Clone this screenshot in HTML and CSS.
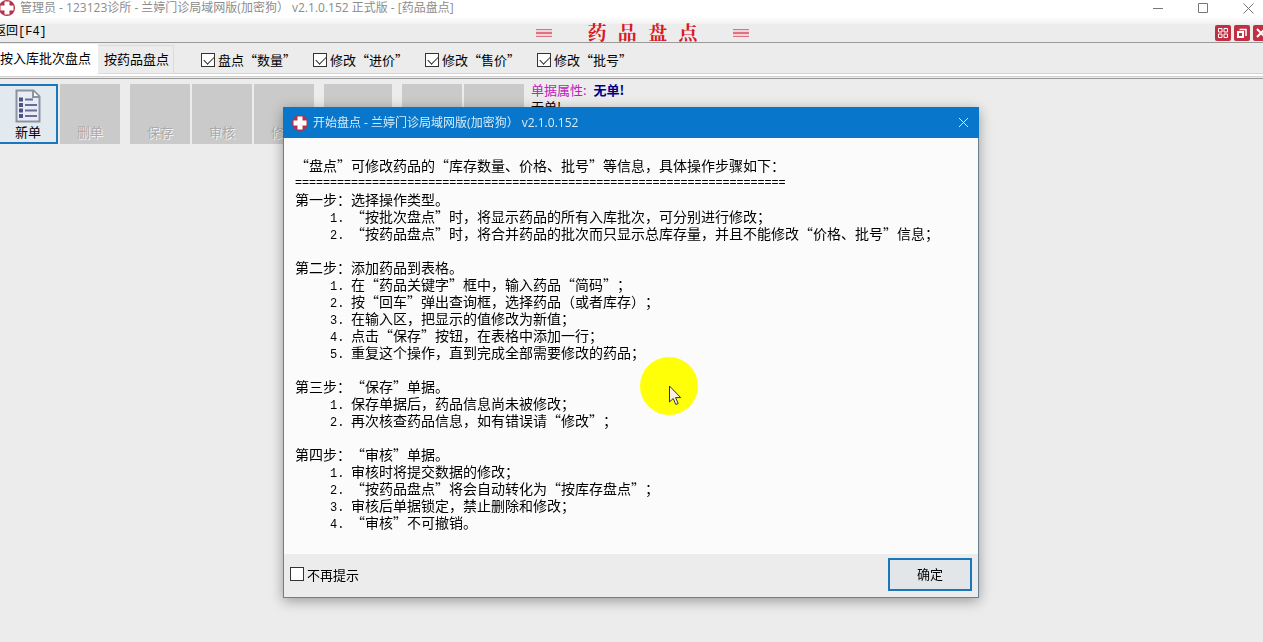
FILE: index.html
```html
<!DOCTYPE html>
<html lang="zh-CN">
	<head>
		<meta charset="UTF-8">
		<title>药品盘点</title>
		<link rel="stylesheet" href="styles.css">
	</head>
	<body>
		<svg width="0" height="0" class="defs">
			<symbol id="cross" viewBox="0 0 16 16">
				<circle cx="8" cy="8" r="8" fill="#b5304a"/>
				<path d="M5.5 1.5h5v4h4v5h-4v4h-5v-4h-4v-5h4z" fill="#fff"/>
			</symbol>
		</svg>

		<header class="titlebar">
			<svg class="logo"><use href="#cross"/></svg>
			<span class="caption">管理员 - 123123诊所 - 兰婷门诊局域网版(加密狗） v2.1.0.152 正式版 - [药品盘点]</span>
			<div class="win-buttons">
				<button aria-label="最小化"><svg width="11" height="11"><path d="M0 5.5h10"/></svg></button>
				<button aria-label="最大化"><svg width="11" height="11"><path d="M.5.5h9v9h-9z"/></svg></button>
				<button aria-label="关闭"><svg width="11" height="11"><path d="M.5.5l10 10M10.5.5l-10 10"/></svg></button>
			</div>
		</header>

		<nav class="menubar">
			<a href="#" class="back">返回[F4]</a>
			<div class="page-title">
				<i class="bars"></i>
				<h1>药 品 盘 点</h1>
				<i class="bars"></i>
			</div>
			<div class="mdi-buttons">
				<button aria-label="平铺"><svg viewBox="0 0 16 16"><path d="M3.5 3.5h3.500v3.500h-3.500zM9 3.5h3.500v3.500h-3.500zM3.500 9h3.500v3.500h-3.500zM9 9h3.500v3.500h-3.500z"/></svg></button>
				<button aria-label="还原"><svg viewBox="0 0 16 16"><path d="M4 7h5v5H4z" stroke-width="2"/><path d="M5.500 4.500h6.500V11" stroke-width="1.500"/></svg></button>
				<button aria-label="关闭窗口"><svg viewBox="0 0 16 16"><path d="M4 4l8 8M12 4l-8 8" stroke-width="2"/></svg></button>
			</div>
		</nav>

		<div class="options">
			<button class="tab active">按入库批次盘点</button>
			<button class="tab">按药品盘点</button>
			<div class="checks">
				<label><input type="checkbox" checked>盘点“数量”</label>
				<label><input type="checkbox" checked>修改“进价”</label>
				<label><input type="checkbox" checked>修改“售价”</label>
				<label><input type="checkbox" checked>修改“批号”</label>
			</div>
		</div>

		<main class="toolbar">
			<div class="group">
				<button class="tool current">
					<svg width="26" height="34" viewBox="0 0 26 34">
						<path d="M1.500 1.500h17l6 6v25h-23z" fill="#e9edf3" stroke="#8b93a3" stroke-width="2"/>
						<path d="M18 2v6h6" fill="#fff" stroke="#8b93a3" stroke-width="2"/>
						<path d="M10 10.500h8M10 16h12M10 21.500h12M10 27h12" stroke="#666c9c" stroke-width="2"/>
						<path d="M4 10.500h4M4 16h4M4 21.500h4M4 27h4" stroke="#4b5287" stroke-width="4"/>
					</svg>
					新单
				</button>
				<button class="tool" disabled>删单</button>
			</div>
			<div class="group">
				<button class="tool" disabled>保存</button>
				<button class="tool" disabled>审核</button>
				<button class="tool" disabled>修改</button>
			</div>
			<div class="group">
				<button class="tool wide" disabled></button>
			</div>
			<div class="group">
				<button class="tool" disabled></button>
				<button class="tool" disabled></button>
			</div>
			<div class="state">
				<p><span class="state-label">单据属性:</span> <b>无单!</b></p>
				<p>无单!</p>
			</div>
		</main>

		<div class="overlay">
			<section class="dialog" role="dialog" aria-labelledby="dialog-title">
				<header class="dialog-head">
					<svg class="logo"><use href="#cross"/></svg>
					<span id="dialog-title">开始盘点 - 兰婷门诊局域网版(加密狗） v2.1.0.152</span>
					<button aria-label="关闭"><svg width="11" height="11"><path d="M1 1l9 9M10 1l-9 9"/></svg></button>
				</header>
				<div class="dialog-body">
					<p>“盘点”可修改药品的“库存数量、价格、批号”等信息，具体操作步骤如下：</p>
					<p class="rule">======================================================================</p>

					<p>第一步：选择操作类型。</p>
					<ol>
						<li><span>1.</span>“按批次盘点”时，将显示药品的所有入库批次，可分别进行修改；</li>
						<li><span>2.</span>“按药品盘点”时，将合并药品的批次而只显示总库存量，并且不能修改“价格、批号”信息；</li>
					</ol>

					<p>第二步：添加药品到表格。</p>
					<ol>
						<li><span>1.</span>在“药品关键字”框中，输入药品“简码”；</li>
						<li><span>2.</span>按“回车”弹出查询框，选择药品（或者库存）；</li>
						<li><span>3.</span>在输入区，把显示的值修改为新值；</li>
						<li><span>4.</span>点击“保存”按钮，在表格中添加一行；</li>
						<li><span>5.</span>重复这个操作，直到完成全部需要修改的药品；</li>
					</ol>

					<p>第三步：“保存”单据。</p>
					<ol>
						<li><span>1.</span>保存单据后，药品信息尚未被修改；</li>
						<li><span>2.</span>再次核查药品信息，如有错误请“修改”；</li>
					</ol>

					<p>第四步：“审核”单据。</p>
					<ol>
						<li><span>1.</span>审核时将提交数据的修改；</li>
						<li><span>2.</span>“按药品盘点”将会自动转化为“按库存盘点”；</li>
						<li><span>3.</span>审核后单据锁定，禁止删除和修改；</li>
						<li><span>4.</span>“审核”不可撤销。</li>
					</ol>
				</div>
				<footer class="dialog-foot">
					<label><input type="checkbox">不再提示</label>
					<button class="ok">确定</button>
				</footer>
				<div class="pointer">
					<svg width="13" height="21" viewBox="0 0 13 21"><path d="M.5 1v16l3.700-3.500 2.600 6 2.400-1-2.600-5.900h5.100z" fill="#f5f0e0" stroke="#333"/></svg>
				</div>
			</section>
		</div>
	</body>
</html>
```
FILE: styles.css
```css
* {
	box-sizing: border-box;
	margin: 0;
	padding: 0;
}

body {
	min-height: 100vh;
	background: #ececec;
	color: #000;
	font: 13px/17px "Noto Sans CJK SC", sans-serif;
	text-spacing-trim: space-all;
	overflow: hidden;
}

button {
	border: 0;
	background: none;
	font: inherit;
	color: inherit;
}

svg { display: block; }

.defs { position: absolute; }

.logo {
	width: 16px;
	height: 16px;
	flex: none;
}

/* main window */

.titlebar {
	display: flex;
	align-items: center;
	height: 24px;
	padding: 0 3px 8px 0;
	background: linear-gradient(#fff 70%, #f1f1f1);
	color: #8c8c8c;
	font: 12px/16px "Open Sans", "Noto Sans CJK SC", sans-serif;
}

.titlebar .logo { margin-left: -1px; }

.caption {
	flex: 1;
	margin-left: 5px;
	white-space: nowrap;
}

.win-buttons {
	display: flex;
	gap: 21px;
}

.win-buttons button {
	display: flex;
	justify-content: center;
	width: 24px;
}

.win-buttons path {
	fill: none;
	stroke: #777;
}

.menubar {
	display: grid;
	grid-template-columns: 1fr auto 1fr;
	align-items: center;
	height: 19px;
	padding-bottom: 2px;
	border-bottom: 1px solid #999;
}

.back {
	margin-left: -6px;
	color: #000;
	font-family: "Liberation Mono", "Noto Sans CJK SC", monospace;
	font-size: 12px;
	text-decoration: none;
}

.page-title {
	display: flex;
	align-items: center;
	gap: 35px;
	height: 16px;
	padding-left: 22px;
}

.page-title h1 {
	padding-top: 4px;
	color: #d8191f;
	font: bold 19px/18px "Liberation Mono", "Noto Serif CJK SC", "Noto Sans CJK SC", serif;
}

.bars {
	width: 16px;
	height: 8px;
	background: repeating-linear-gradient(#dc7380 0 1px, #f3d3d7 1px 3px, #dc7380 3px 4px);
}

.mdi-buttons {
	display: flex;
	justify-content: flex-end;
	gap: 3px;
	margin-right: -6px;
}

.mdi-buttons button {
	width: 16px;
	height: 16px;
	border-radius: 2px;
	background: #c02f42;
}

.mdi-buttons path {
	fill: none;
	stroke: #fff;
}

.options {
	display: flex;
	height: 36px;
	border-bottom: 1px solid #999;
	background: linear-gradient(#ececec 30px, #d2d2d2 30px 31px, #fff 31px 33px, #d2d2d2 33px 34px, #ececec 34px);
}

.tab {
	height: 29px;
	margin-top: 2px;
	padding: 0 4px 2px 6px;
	border: 1px solid #dcdcdc;
	border-left: 0;
	white-space: nowrap;
}

.tab.active {
	height: 30px;
	margin-top: 1px;
	padding: 0 7px 4px 0;
	border: 0;
	background: #fff;
}

.checks {
	display: flex;
	gap: 17px;
	height: 33px;
	margin-left: 27px;
}

label {
	display: flex;
	align-items: center;
	gap: 3px;
	white-space: nowrap;
}

input[type=checkbox] {
	appearance: none;
	width: 14px;
	height: 14px;
	border: 1px solid #333;
	background: #fff;
}

input[type=checkbox]:checked::before {
	content: "";
	display: block;
	width: 9px;
	height: 5px;
	margin: 2px 0 0 2px;
	border: solid #333;
	border-width: 0 0 1px 1px;
	transform: rotate(-45deg);
}

.toolbar {
	display: flex;
	gap: 10px;
	padding-top: 2px;
}

.group {
	display: flex;
	gap: 2px;
	margin-top: 3px;
}

.tool {
	display: flex;
	flex-direction: column;
	align-items: center;
	justify-content: flex-end;
	width: 60px;
	height: 60px;
	padding-bottom: 4px;
	background: #cacaca;
}

.tool:disabled {
	color: #aaa;
	text-shadow: 1px 1px #f4f4f4;
}

.tool.wide { width: 68px; }

.tool.current {
	width: 58px;
	padding-bottom: 2px;
	border: 2px solid #1b77bb;
	border-left: 0;
	background: #e2e9ef;
}

.state { margin-left: -3px; }

.state-label {
	margin-right: 4px;
	color: #c020c0;
}

.state b { color: #00008b; }

/* prompt window */

.overlay {
	position: fixed;
	inset: 0;
	display: flex;
	align-items: flex-start;
	justify-content: center;
	padding: 107px 1px 0 0;
}

.dialog {
	position: relative;
	width: 696px;
	max-width: 100%;
	border: 1px solid #6b7f8f;
	border-top: 0;
	background: #fbfbfb;
	box-shadow: 0 3px 12px rgba(0, 0, 0, 0.35);
}

.dialog-head {
	display: flex;
	align-items: center;
	height: 31px;
	margin: 0 -1px;
	padding: 0 10px 0 9px;
	background: #0877cb;
	color: #d5ecfa;
	font: 12px/16px "Open Sans", "Noto Sans CJK SC", sans-serif;
}

.dialog-head span {
	flex: 1;
	margin-left: 5px;
}

.dialog-head path {
	stroke: #d5ecfa;
}

.dialog-body {
	padding: 19px 11px 23px;
	font-size: 14px;
	white-space: nowrap;
}

.dialog-body ol {
	margin-bottom: 17px;
	padding-left: 35px;
	list-style: none;
}

.dialog-body ol:last-child { margin-bottom: 0; }

.dialog-body li {
	display: flex;
	align-items: baseline;
	height: 17px;
}

.dialog-body li span {
	width: 21px;
	font-family: "Liberation Mono", monospace;
	font-size: 12px;
}

.dialog-body .rule {
	font-family: "Liberation Sans", sans-serif;
	font-size: 12px;
}

.dialog-foot {
	display: flex;
	align-items: center;
	justify-content: space-between;
	height: 43px;
	padding: 0 6px 3px;
	background: #ececec;
}

.ok {
	width: 84px;
	height: 33px;
	padding-bottom: 2px;
	border: 2px solid #1b77bb;
	background: #e3e6e8;
}

.pointer {
	position: absolute;
	left: 356px;
	top: 250px;
	width: 58px;
	height: 58px;
	padding: 28px 0 0 29px;
	border-radius: 50%;
	background: #ffff08;
}
```
